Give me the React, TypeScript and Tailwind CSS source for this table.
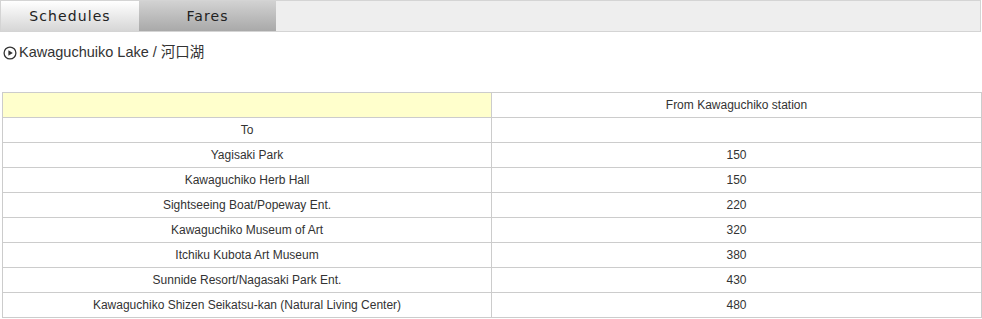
const rows = [
  { to: "Yagisaki Park", fare: "150" },
  { to: "Kawaguchiko Herb Hall", fare: "150" },
  { to: "Sightseeing Boat/Popeway Ent.", fare: "220" },
  { to: "Kawaguchiko Museum of Art", fare: "320" },
  { to: "Itchiku Kubota Art Museum", fare: "380" },
  { to: "Sunnide Resort/Nagasaki Park Ent.", fare: "430" },
  { to: "Kawaguchiko Shizen Seikatsu-kan (Natural Living Center)", fare: "480" },
];

export default function App() {
  return (
    <div className="w-[982px] h-[319px] bg-white text-[#333] font-['Liberation_Sans',Arial,sans-serif] overflow-hidden">
      {/* tabs */}
      <div className="flex h-[32px] w-[981px] border border-[#d4d4d4] bg-[#eeeeee]">
        <div className="flex w-[138px] items-center justify-center bg-gradient-to-b from-[#ffffff] to-[#d6d6d6] text-[14px] tracking-[1.1px] text-[#222] font-['DejaVu_Sans',sans-serif]">
          Schedules
        </div>
        <div className="flex w-[137px] items-center justify-center bg-gradient-to-b from-[#d2d2d2] to-[#a9a9a9] text-[14px] tracking-[1.1px] text-[#222] font-['DejaVu_Sans',sans-serif]">
          Fares
        </div>
      </div>

      {/* title */}
      <div className="mt-[12px] flex h-[18px] items-center gap-[2px] pl-[3px] text-[14.5px] text-[#333]">
        <svg width="14" height="14" viewBox="0 0 14 14" className="shrink-0">
          <circle cx="7" cy="7" r="5.9" fill="none" stroke="#333" strokeWidth="1.3" />
          <path d="M5.4 4.2 L9.8 7 L5.4 9.8 Z" fill="#333" />
        </svg>
        <span className="font-['Liberation_Sans','Noto_Sans_CJK_JP',sans-serif]">Kawaguchuiko Lake / 河口湖</span>
      </div>

      {/* fare table */}
      <table className="ml-[2px] mt-[30px] w-[980px] border-collapse text-[12px] text-[#333]">
        <tbody>
          <tr className="h-[25px]">
            <td className="w-[489px] border border-[#cccccc] bg-[#ffffcc]"></td>
            <td className="border border-[#cccccc] text-center">From Kawaguchiko station</td>
          </tr>
          <tr className="h-[25px]">
            <td className="border border-[#cccccc] text-center">To</td>
            <td className="border border-[#cccccc]"></td>
          </tr>
          {rows.map((r) => (
            <tr key={r.to} className="h-[25px]">
              <td className="border border-[#cccccc] text-center">{r.to}</td>
              <td className="border border-[#cccccc] text-center">{r.fare}</td>
            </tr>
          ))}
        </tbody>
      </table>
    </div>
  );
}
